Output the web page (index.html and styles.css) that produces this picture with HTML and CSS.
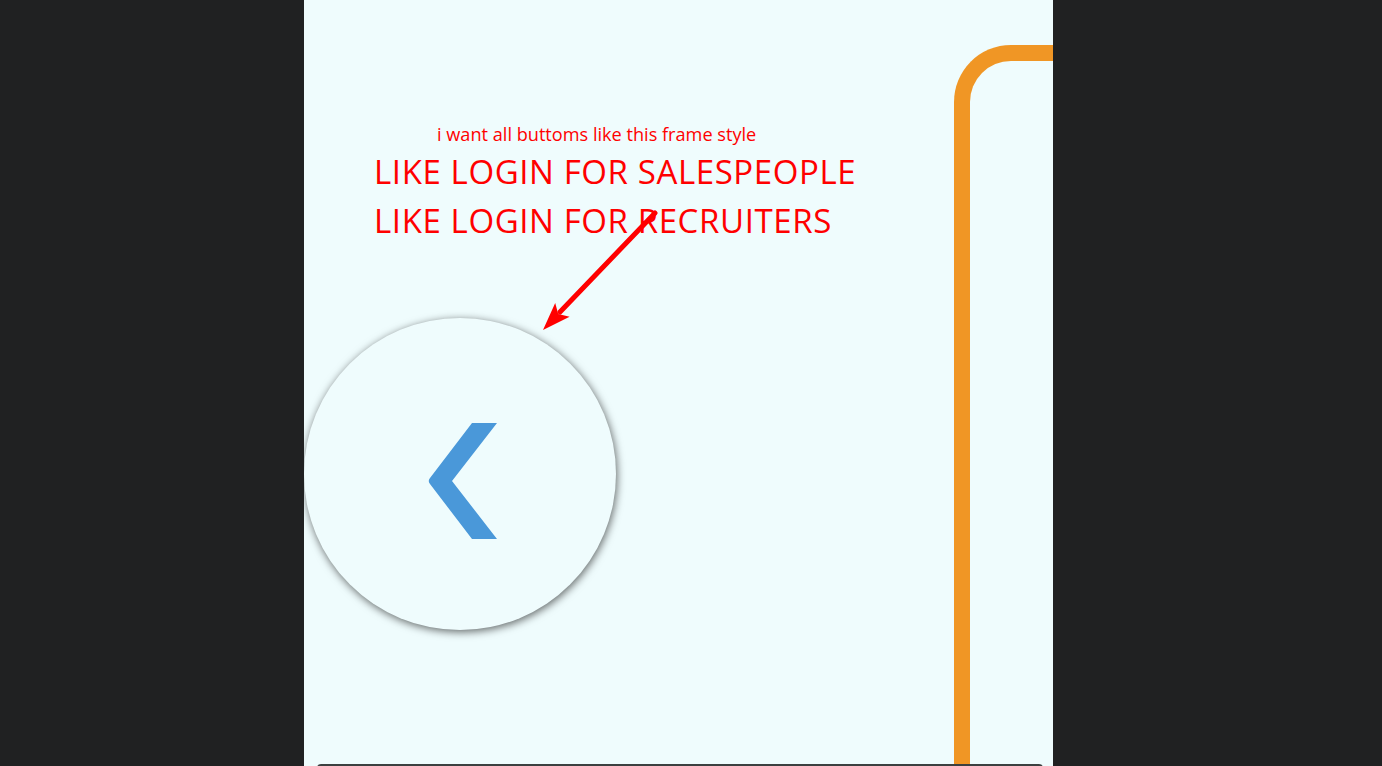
FILE: index.html
```html
<!DOCTYPE html>
<html lang="en">
<head>
<meta charset="utf-8">
<title>Frame style</title>
<link rel="stylesheet" href="styles.css">
</head>
<body>
<main class="panel">
  <section class="content">
    <p class="note">i want all buttoms like this frame style</p>
    <div class="headline">
      <p>LIKE LOGIN FOR SALESPEOPLE</p>
      <p>LIKE LOGIN FOR RECRUITERS</p>
    </div>
    <button class="round-btn" type="button" aria-label="Back">
      <svg class="chev" width="312" height="312" viewBox="0 0 312 312">
        <path d="M168 105 L193 105 L148 163 L193 221 L168 221 L126 166 Q123.5 163 126 160 Z" fill="#4a98d9"/>
      </svg>
    </button>
  </section>
  <aside class="frame"></aside>
  <svg class="arrow" width="749" height="766" viewBox="0 0 749 766">
    <line x1="351" y1="213" x2="256" y2="312" stroke="#ff0000" stroke-width="5" stroke-linecap="round"/>
    <polygon points="239,330 265.6,316.7 254.2,314.1 251.2,302.9" fill="#ff0000"/>
  </svg>
  <div class="dock"></div>
</main>
</body>
</html>
```

FILE: styles.css
```css
html, body {
  margin: 0;
  padding: 0;
  background: #202122;
  height: 100%;
  overflow: hidden;
}

.panel {
  position: relative;
  margin-left: 304px;
  width: 749px;
  height: 766px;
  background: #effcfd;
  display: flex;
  overflow: hidden;
  font-family: "Open Sans", "Liberation Sans", sans-serif;
  color: #ff0000;
}

.content {
  flex: 1;
  display: flex;
  flex-direction: column;
  align-items: flex-start;
  padding-top: 124px;
}

.note {
  margin: 0 0 0 133px;
  font-size: 18.15px;
  line-height: 20px;
  white-space: nowrap;
}

.headline {
  margin: 3px 0 0 70px;
}

.headline p {
  margin: 0;
  font-size: 33px;
  line-height: 49px;
  letter-spacing: 0.6px;
  white-space: nowrap;
}

.round-btn {
  margin-top: 73px;
  width: 312px;
  height: 312px;
  padding: 0;
  border: 0;
  border-radius: 50%;
  background: #effcfd;
  box-shadow: 1px 2px 9px rgba(0, 0, 0, 0.6);
  display: flex;
  align-items: center;
  justify-content: center;
}

.chev {
  display: block;
}

.frame {
  flex: 0 0 99px;
  box-sizing: border-box;
  margin-top: 45px;
  margin-bottom: -40px;
  border-top: 16px solid #f09625;
  border-left: 16px solid #f09625;
  border-top-left-radius: 57px 57px;
}

.arrow {
  position: absolute;
  left: 0;
  top: 0;
  pointer-events: none;
}

.dock {
  position: absolute;
  left: 13px;
  right: 10px;
  bottom: -20px;
  height: 22px;
  background: #3b4040;
  border-radius: 4px;
}
```
